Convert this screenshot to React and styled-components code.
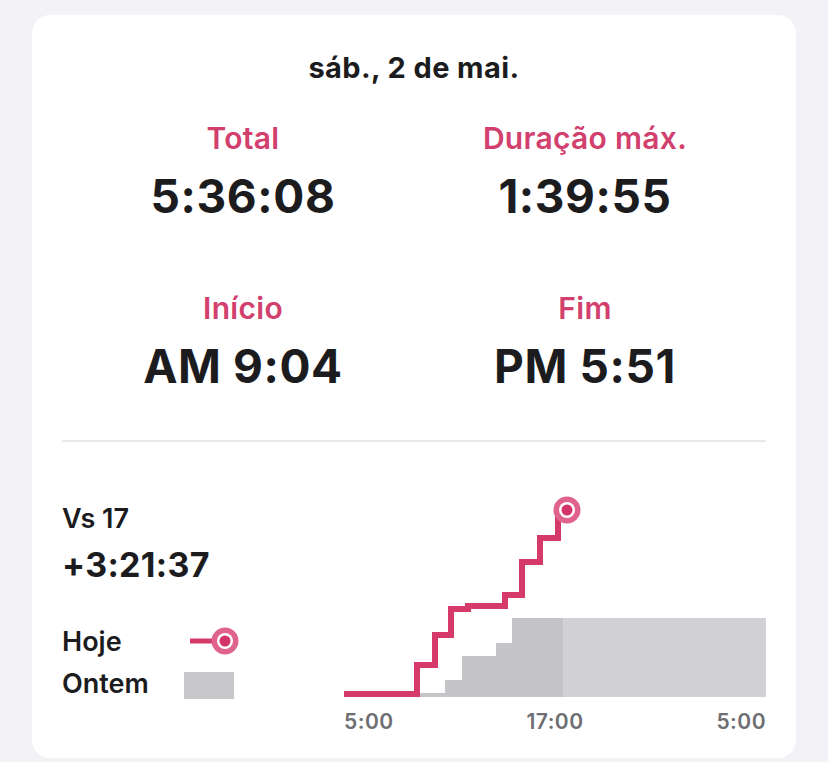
import styled, { createGlobalStyle } from "styled-components";

const GlobalStyle = createGlobalStyle`
  body {
    margin: 0;
    background: #f2f2f7;
    font-family: Inter, "Noto Sans", sans-serif;
    color: #1c1c1e;
  }
`;

const stats = [
  { label: "Total", value: "5:36:08" },
  { label: "Duração máx.", value: "1:39:55" },
  { label: "Início", value: "AM 9:04" },
  { label: "Fim", value: "PM 5:51" },
];

export default function App() {
  return (
    <>
      <GlobalStyle />
      <Page>
        <Card>
          <DateTitle>sáb., 2 de mai.</DateTitle>
          <StatsGrid>
            {stats.map((s) => (
              <Stat key={s.label}>
                <StatLabel>{s.label}</StatLabel>
                <StatValue>{s.value}</StatValue>
              </Stat>
            ))}
          </StatsGrid>
          <Divider />
          <Compare>
            <Summary>
              <VsLabel>Vs 17</VsLabel>
              <VsValue>+3:21:37</VsValue>
              <Legend>
                <LegendRow>
                  <span>Hoje</span>
                  <svg width="56" height="30" viewBox="184 632 56 30">
                    <line x1="190" y1="647" x2="214" y2="647" stroke="#d63a6a" strokeWidth="5" />
                    <circle cx="225" cy="647" r="13.5" fill="#e0628f" />
                    <circle cx="225" cy="647" r="8" fill="#fff" />
                    <circle cx="225" cy="647" r="5.5" fill="#d43369" />
                  </svg>
                </LegendRow>
                <LegendRow>
                  <span>Ontem</span>
                  <Swatch />
                </LegendRow>
              </Legend>
            </Summary>
            <ChartCol>
              <svg width="422" height="212" viewBox="344 490 422 212">
                <path
                  d="M417,697 V693 H445 V680 H462 V656 H496 V643 H512 V618 H563 V697 Z"
                  fill="#c5c5c9"
                />
                <rect x="563" y="618" width="203" height="79" fill="#d1d1d6" />
                <path
                  d="M344,694 H417 V665 H435 V635 H451 V609 H468 V606 H505 V595 H522 V562 H540 V538 H558 V512"
                  fill="none"
                  stroke="#d63a6a"
                  strokeWidth="6"
                />
                <circle cx="567" cy="510" r="13.5" fill="#e0628f" />
                <circle cx="567" cy="510" r="8" fill="#fff" />
                <circle cx="567" cy="510" r="5.5" fill="#d43369" />
              </svg>
              <Axis>
                <span>5:00</span>
                <span>17:00</span>
                <span>5:00</span>
              </Axis>
            </ChartCol>
          </Compare>
        </Card>
      </Page>
    </>
  );
}

const Page = styled.div`
  width: 828px;
  height: 762px;
  padding: 15px 32px 0;
  box-sizing: border-box;
`;

const Card = styled.div`
  background: #fff;
  border-radius: 18px;
  height: 743px;
  box-sizing: border-box;
  padding: 39px 30px 0;
`;

const DateTitle = styled.div`
  text-align: center;
  font-size: 29px;
  line-height: 28px;
  font-weight: 700;
  letter-spacing: 0.4px;
`;

const StatsGrid = styled.div`
  display: grid;
  grid-template-columns: 1fr 1fr;
  row-gap: 69px;
  margin: 40px 10px 0;
`;

const Stat = styled.div`
  display: flex;
  flex-direction: column;
  align-items: center;
  gap: 15px;
`;

const StatLabel = styled.div`
  color: #d2406e;
  font-size: 30px;
  line-height: 32px;
  font-weight: 600;
  letter-spacing: 0.3px;
`;

const StatValue = styled.div`
  font-size: 46px;
  line-height: 54px;
  font-weight: 700;
  letter-spacing: 0.6px;
`;

const Divider = styled.div`
  height: 2px;
  background: #e8e8ec;
  margin-top: 47px;
`;

const Compare = styled.div`
  display: flex;
  padding-top: 48px;
`;

const Summary = styled.div`
  width: 282px;
  padding-top: 15px;
  display: flex;
  flex-direction: column;
`;

const VsLabel = styled.div`
  font-size: 27px;
  line-height: 28px;
  font-weight: 600;
`;

const VsValue = styled.div`
  font-size: 34px;
  line-height: 40px;
  font-weight: 700;
  letter-spacing: 0.3px;
  margin-top: 12px;
`;

const Legend = styled.div`
  margin-top: 42px;
  display: flex;
  flex-direction: column;
  gap: 14px;
`;

const LegendRow = styled.div`
  display: flex;
  align-items: center;
  height: 28px;
  font-size: 27px;
  font-weight: 600;

  span {
    width: 122px;
  }
`;

const Swatch = styled.div`
  width: 50px;
  height: 27px;
  background: #c7c7cc;
  margin-top: 4px;
`;

const ChartCol = styled.div`
  width: 422px;
  display: flex;
  flex-direction: column;

  svg {
    display: block;
  }
`;

const Axis = styled.div`
  display: flex;
  justify-content: space-between;
  margin-top: 8px;
  font-size: 21px;
  line-height: 24px;
  font-weight: 600;
  letter-spacing: 0.5px;
  color: #6e6e73;
`;
